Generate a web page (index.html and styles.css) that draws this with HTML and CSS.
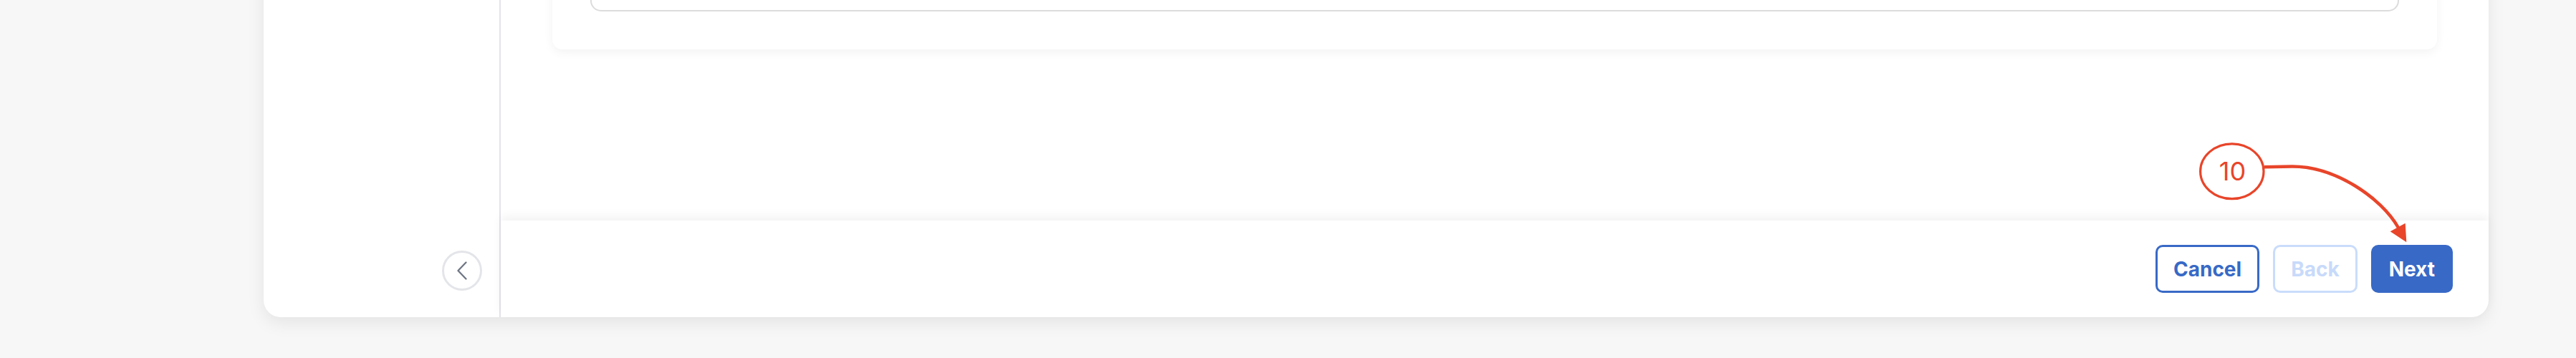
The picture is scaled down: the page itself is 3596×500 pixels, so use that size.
FILE: index.html
```html
<!DOCTYPE html>
<html lang="en">
<head>
    <meta charset="UTF-8">
    <meta name="viewport" content="width=device-width, initial-scale=1.0">
    <title>Wizard</title>
    <link rel="stylesheet" href="styles.css">
</head>
<body>
    <div class="panel">
        <aside class="sidebar">
            <button class="collapse-btn" aria-label="Collapse">
                <svg width="14" height="26" viewBox="0 0 14 26">
                    <polyline points="12.5,1.5 1.5,13 12.5,24.5" fill="none" stroke="#6f7683" stroke-width="2.3" stroke-linecap="round" stroke-linejoin="round"/>
                </svg>
            </button>
        </aside>
        <div class="main">
            <div class="content">
                <div class="card">
                    <div class="field"></div>
                </div>
            </div>
            <div class="footer">
                <button class="btn btn-outline">Cancel</button>
                <button class="btn btn-disabled" disabled>Back</button>
                <button class="btn btn-primary">Next</button>
            </div>
        </div>
    </div>

    <!-- step annotation -->
    <svg class="callout" width="320" height="170" viewBox="0 0 320 170">
        <ellipse cx="55.8" cy="49.3" rx="44.2" ry="38.4" fill="none" stroke="#e8452a" stroke-width="3.2"/>
        <text x="56.5" y="61.7" text-anchor="middle" class="callout-num">10</text>
        <path d="M101 43.3 L140 42.5 C200 42.5 264 86 288 128" fill="none" stroke="#e8452a" stroke-width="4.5"/>
        <polygon points="276.7,133.3 297.7,121.7 299.3,148.3" fill="#e8452a"/>
    </svg>
</body>
</html>
```

FILE: styles.css
```css
body {
    margin: 0;
    background: #f7f7f7;
    font-family: Inter, "Noto Sans", sans-serif;
    position: relative;
    height: 500px;
    overflow: hidden;
}
.panel {
    display: flex;
    margin: -100px 0 0 368px;
    width: 3106px;
    height: 543px;
    background: #fff;
    border-radius: 0 0 24px 24px;
    box-shadow: 0 8px 24px rgba(0, 0, 0, 0.08);
}
.sidebar {
    width: 331px;
    border-right: 2px solid #e4e3e9;
    display: flex;
    align-items: flex-end;
    justify-content: flex-end;
    padding: 0 24px 37px 0;
    box-sizing: border-box;
    flex-shrink: 0;
}
.collapse-btn {
    width: 56px;
    height: 56px;
    border-radius: 50%;
    border: 3px solid #e4e5e9;
    background: #fff;
    display: flex;
    align-items: center;
    justify-content: center;
    padding: 0;
    cursor: pointer;
}
.main {
    flex: 1;
    display: flex;
    flex-direction: column;
}
.content {
    flex: 1;
    padding: 0 72px 0 72px;
}
.card {
    background: #fff;
    border-radius: 0 0 14px 14px;
    box-shadow: 0 4px 14px rgba(0, 0, 0, 0.05);
    padding: 20px 53px 53px;
}
.field {
    height: 96px;
    border: 2px solid #dcdcdc;
    border-top: none;
    border-radius: 0 0 15px 15px;
    box-sizing: border-box;
}
.footer {
    height: 135px;
    flex-shrink: 0;
    display: flex;
    align-items: center;
    justify-content: flex-end;
    gap: 19px;
    padding-right: 50px;
    box-shadow: 0 -6px 14px rgba(0, 0, 0, 0.05);
    border-radius: 0 0 24px 0;
}
.btn {
    height: 67px;
    padding: 0 22px;
    border-radius: 10px;
    font-family: Inter, "Noto Sans", sans-serif;
    font-weight: 700;
    font-size: 28px;
    cursor: pointer;
    box-sizing: border-box;
}
.btn-outline {
    background: #fff;
    border: 3.5px solid #3869c6;
    color: #3869c6;
}
.btn-disabled {
    background: #fff;
    border: 3.5px solid #cadcfb;
    color: #c8dafa;
    cursor: default;
}
.btn-primary {
    background: #3869c6;
    border: 3.5px solid #3869c6;
    color: #fff;
}
.callout {
    position: absolute;
    left: 3060px;
    top: 190px;
}
.callout-num {
    font-family: Inter, "Noto Sans", sans-serif;
    font-size: 36px;
    font-weight: 400;
    fill: #e8452a;
}
```
